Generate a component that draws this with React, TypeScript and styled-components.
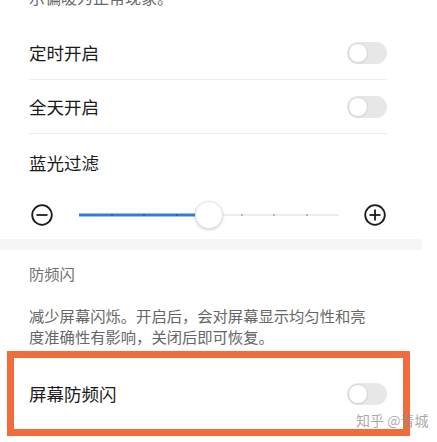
import React from "react";
import styled, { createGlobalStyle } from "styled-components";

const Global = createGlobalStyle`
  html, body { margin: 0; padding: 0; background: #fff; }
  body { font-family: "Noto Sans CJK SC", "Noto Sans", sans-serif; }
  * { box-sizing: border-box; }
`;

const Page = styled.div`
  position: relative;
  width: 437px;
  height: 442px;
  overflow: hidden;
  background: #fff;
`;

const Screen = styled.div`
  width: 422px;
  display: flex;
  flex-direction: column;
`;

const Intro = styled.div`
  margin-top: -13px;
  padding-left: 29px;
  font-size: 16px;
  line-height: 20px;
  color: #6a6a6a;
  height: 39px;
`;

const Row = styled.div<{ $divider?: boolean }>`
  margin: 0 35px 0 29px;
  height: 54px;
  display: flex;
  align-items: center;
  justify-content: space-between;
  border-bottom: ${(p) => (p.$divider ? "1px solid #ececec" : "none")};
`;

const Title = styled.span`
  font-size: 17.5px;
  color: #1a1a1a;
  letter-spacing: 0;
`;

const Track = styled.div`
  position: relative;
  width: 40px;
  height: 22px;
  border-radius: 11px;
  background: #e7e7e7;
  flex-shrink: 0;
`;

const Knob = styled.div`
  position: absolute;
  left: 1px;
  top: 1px;
  width: 20px;
  height: 20px;
  border-radius: 50%;
  background: #fff;
  border: 1.5px solid #d8d8d8;
  box-shadow: 0 1px 1px rgba(0, 0, 0, 0.06);
`;

const Switch = () => (
  <Track>
    <Knob />
  </Track>
);

const LabelRow = styled.div`
  height: 56px;
  padding-left: 29px;
  display: flex;
  align-items: center;
`;

const SliderRow = styled.div`
  height: 49px;
  padding-left: 31px;
  display: flex;
  align-items: center;
`;

const SliderArea = styled.div`
  position: relative;
  width: 260px;
  height: 28px;
  margin: 0 25px 0 26px;
`;

const Rail = styled.div<{ $filled?: boolean }>`
  position: absolute;
  top: 50%;
  height: ${(p) => (p.$filled ? "3px" : "1px")};
  transform: translateY(-50%);
  background: ${(p) => (p.$filled ? "#2f7fd4" : "#dcdcdc")};
`;

const Dot = styled.div<{ $filled?: boolean }>`
  position: absolute;
  top: 50%;
  width: 2px;
  height: 2px;
  border-radius: 1px;
  transform: translate(-50%, -50%);
  background: ${(p) => (p.$filled ? "#1f5e9f" : "#a5a5a5")};
`;

const Thumb = styled.div`
  position: absolute;
  top: 0;
  width: 28px;
  height: 28px;
  border-radius: 50%;
  background: #fff;
  transform: translateX(-50%);
  border: 1px solid #e4e4e4;
  box-shadow: 0 1px 3px rgba(0, 0, 0, 0.18);
`;

const Band = styled.div`
  height: 11px;
  background: #f5f5f5;
`;

const SectionHeader = styled.div`
  padding: 13px 0 0 29px;
  font-size: 15.3px;
  line-height: 20px;
  color: #707070;
`;

const Desc = styled.div`
  padding: 22px 50px 0 29px;
  font-size: 15.3px;
  line-height: 21px;
  color: #666;
`;

const Highlight = styled.div`
  margin: 4px 0 0 7px;
  width: 403px;
  height: 85px;
  border: 7px solid #f26b3a;
  display: flex;
  align-items: center;
  justify-content: space-between;
  padding: 0 16px 0 15px;
`;

const Watermark = styled.div`
  position: absolute;
  left: 356px;
  top: 411px;
  font-size: 14px;
  line-height: 18px;
  color: rgba(140, 140, 140, 0.75);
  white-space: nowrap;
`;

const CircleIcon = ({ plus }: { plus?: boolean }) => (
  <svg width="22" height="22" viewBox="0 0 22 22">
    <circle cx="11" cy="11" r="9.8" fill="none" stroke="#1b1b1b" strokeWidth="1.8" />
    <line x1="5.5" y1="11" x2="16.5" y2="11" stroke="#1b1b1b" strokeWidth="1.8" />
    {plus && <line x1="11" y1="5.5" x2="11" y2="16.5" stroke="#1b1b1b" strokeWidth="1.8" />}
  </svg>
);

const Slider = ({ value, steps }: { value: number; steps: number }) => {
  const pos = (value / steps) * 100;
  const dots = Array.from({ length: steps - 1 }, (_, i) => i + 1);
  return (
    <SliderArea>
      <Rail style={{ left: 0, right: 0 }} />
      <Rail $filled style={{ left: 0, width: `${pos}%` }} />
      {dots.map((d) => (
        <Dot key={d} $filled={d < value} style={{ left: `${(d / steps) * 100}%` }} />
      ))}
      <Thumb style={{ left: `${pos}%` }} />
    </SliderArea>
  );
};

export default function App() {
  return (
    <Page>
      <Global />
      <Screen>
        <Intro>示偏暖为正常现象。</Intro>
        <Row $divider>
          <Title>定时开启</Title>
          <Switch />
        </Row>
        <Row $divider>
          <Title>全天开启</Title>
          <Switch />
        </Row>
        <LabelRow>
          <Title>蓝光过滤</Title>
        </LabelRow>
        <SliderRow>
          <CircleIcon />
          <Slider value={4} steps={8} />
          <CircleIcon plus />
        </SliderRow>
        <Band />
        <SectionHeader>防频闪</SectionHeader>
        <Desc>减少屏幕闪烁。开启后，会对屏幕显示均匀性和亮度准确性有影响，关闭后即可恢复。</Desc>
      </Screen>
      <Highlight>
        <Title>屏幕防频闪</Title>
        <Switch />
      </Highlight>
      <Watermark>知乎 @青城</Watermark>
    </Page>
  );
}
